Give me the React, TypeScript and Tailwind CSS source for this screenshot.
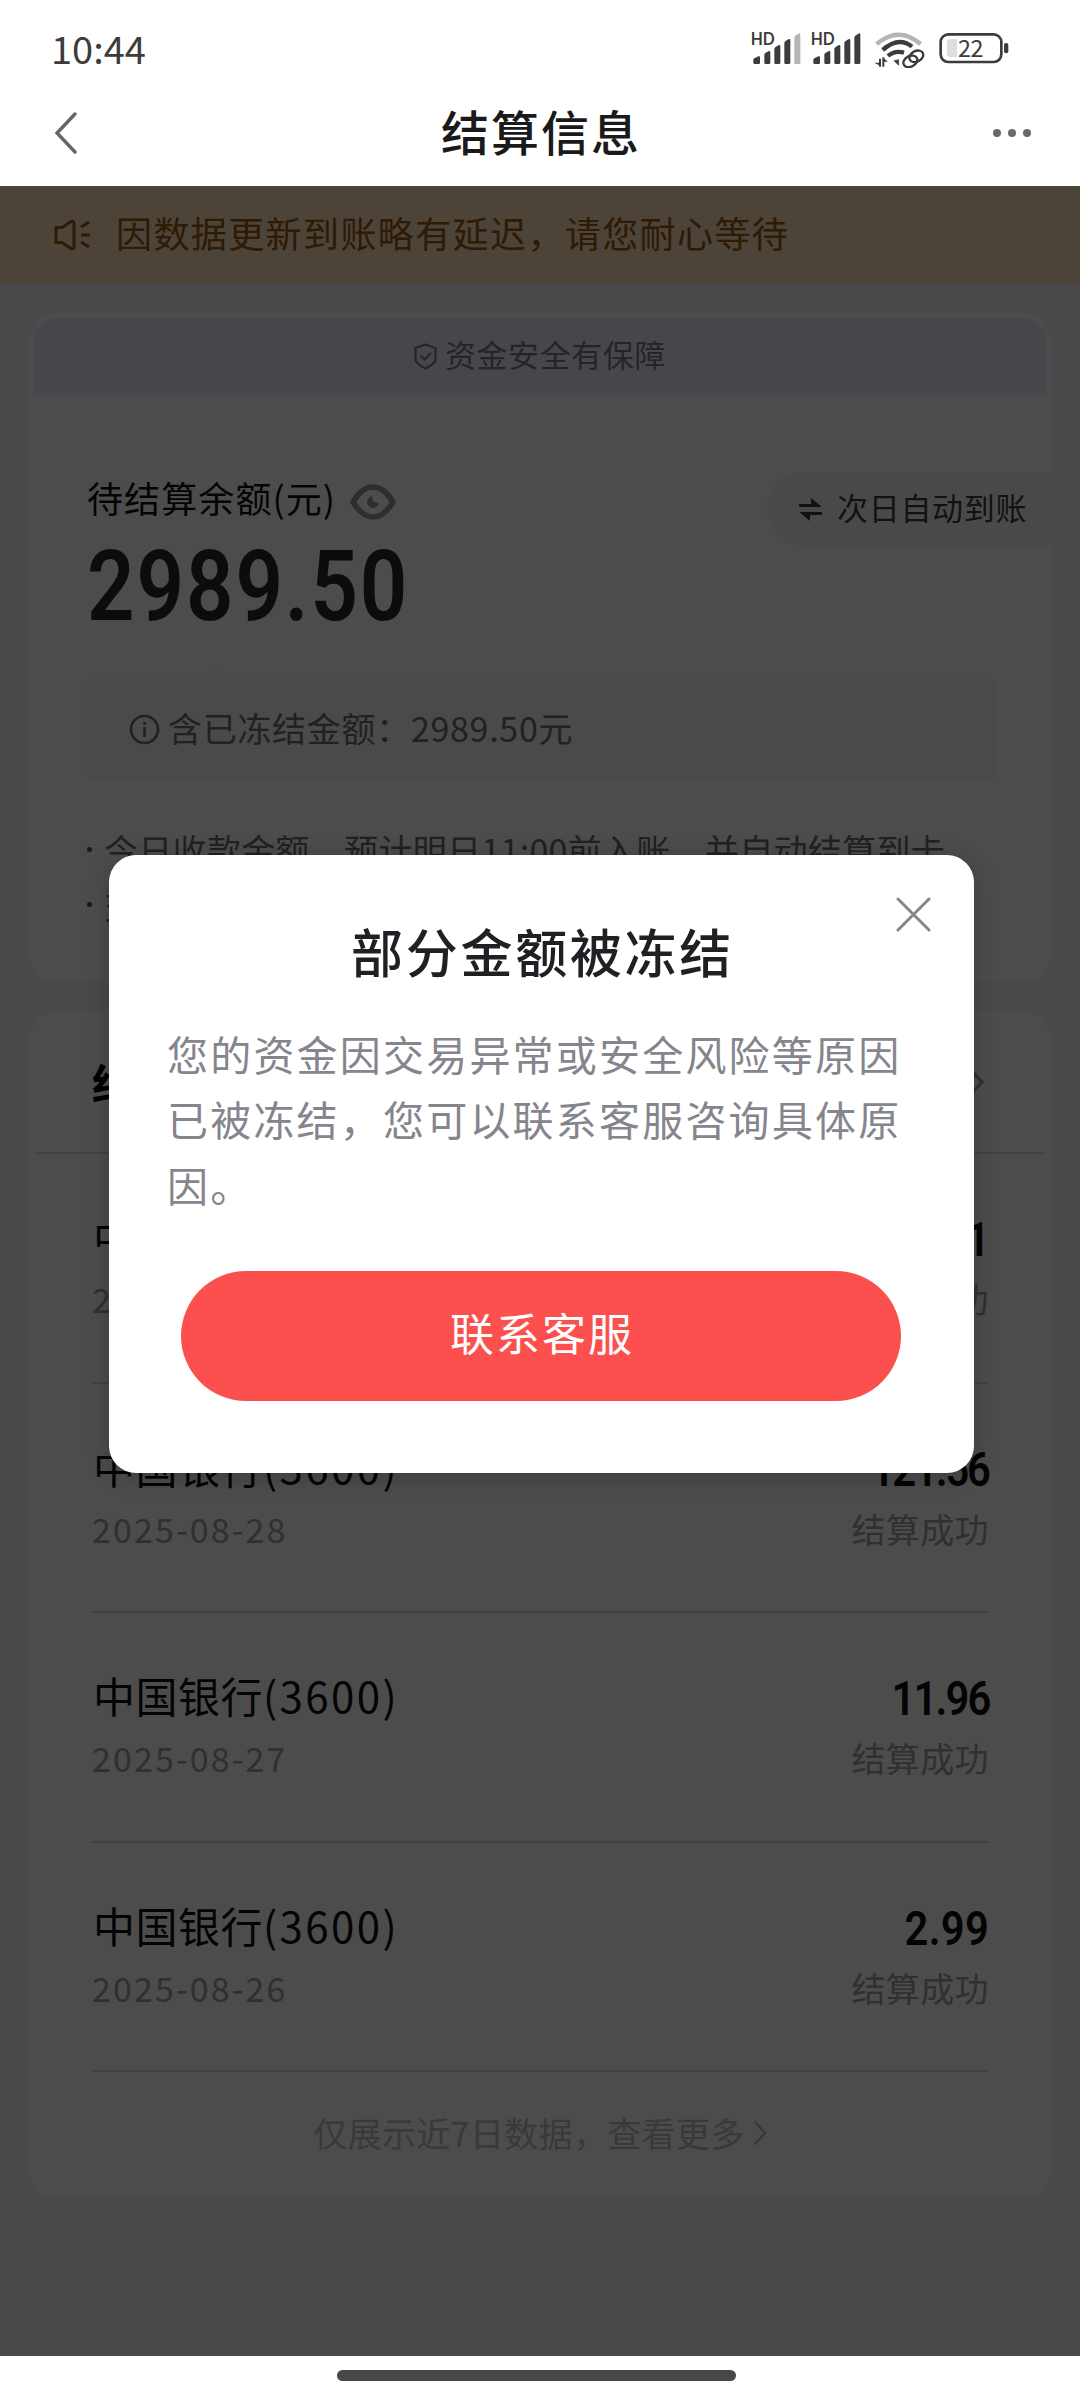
import React from 'react';

interface Settlement {
  date: string;
  amount: string;
  tracking: string;
}

const settlements: Settlement[] = [
  { date: '2025-08-29', amount: '0.01', tracking: 'tracking-[-1px]' },
  { date: '2025-08-28', amount: '121.56', tracking: 'tracking-[-2.500px]' },
  { date: '2025-08-27', amount: '11.96', tracking: 'tracking-[-2.200px]' },
  { date: '2025-08-26', amount: '2.99', tracking: 'tracking-[0.300px]' },
];

function SignalIcon({ weak }: { weak?: boolean }) {
  return (
    <svg className="w-[52px] h-[34px] overflow-visible" viewBox="0 0 156 102" fill="#3c3c3c">
      <text x="2" y="38" fontSize="50" fontWeight="700" fontFamily="Lato, sans-serif" textLength="72" lengthAdjust="spacingAndGlyphs">
        HD
      </text>
      <path d="M10 84q0-3 3-5l12-6q5-2 5 3v16q0 4-4 4H14q-4 0-4-4z" />
      <path d="M43 69q0-4 3-6l9-5q6-3 6 3v31q0 4-4 4H47q-4 0-4-4z" />
      <path d="M73 52q0-4 3-6l9-6q6-3 6 3v49q0 4-4 4H77q-4 0-4-4z" />
      <path d="M103 34q0-4 3-6l9-6q6-3 6 3v67q0 4-4 4h-10q-4 0-4-4z" />
      <path fill={weak ? '#b5b5b5' : '#3c3c3c'} d="M133 17q0-4 3-6l9-6q6-3 6 3v84q0 4-4 4h-10q-4 0-4-4z" />
    </svg>
  );
}

function WifiIcon() {
  return (
    <svg className="w-[52px] h-[36px]" viewBox="0 0 156 108" fill="none" stroke="#3c3c3c">
      <path d="M8 36Q74-20 140 36" stroke="#b5b5b5" strokeWidth="13" />
      <path d="M26 54Q74 12 114 44" strokeWidth="13" />
      <path d="M42 72Q62 54 90 62" strokeWidth="13" />
      <path d="M60 86l14-3v17z" fill="#3c3c3c" strokeWidth="2" />
      <path d="M18 80v24M28 76v28" strokeWidth="6" />
      <path d="M1 92h17v9zM28 78v11h14z" fill="#3c3c3c" stroke="none" />
      <g strokeWidth="7">
        <ellipse cx="127" cy="73" rx="22" ry="16" transform="rotate(-28 127 73)" />
        <ellipse cx="109" cy="88" rx="22" ry="16" transform="rotate(-28 109 88)" />
      </g>
    </svg>
  );
}

function BatteryIcon() {
  return (
    <svg className="w-[70px] h-[32px] overflow-visible" viewBox="0 0 210 96" fill="none">
      <rect x="5" y="7" width="182" height="83" rx="23" stroke="#3c3c3c" strokeWidth="8" />
      <path d="M54 21v54H33q-9 0-9-9V30q0-9 9-9z" fill="#dedede" />
      <rect x="195" y="33" width="13" height="31" rx="6" fill="#3c3c3c" />
      <text x="57" y="75" fontSize="70" fill="#3c3c3c" fontFamily="Noto Sans CJK SC, sans-serif" textLength="76">
        22
      </text>
    </svg>
  );
}

function Chevron({ className }: { className: string }) {
  return (
    <svg className={className} viewBox="0 0 16 30" fill="none" stroke="currentColor" strokeWidth="3">
      <path d="M1.5 1.5L14 15L1.5 28.5" />
    </svg>
  );
}

function TopBar() {
  return (
    <header className="h-[186px] bg-white">
      <div className="h-[96px] pl-[51px] pr-[71px] flex items-center justify-between">
        <span className="pb-[1px] text-[38px] leading-none text-[#3c3c3c]">10:44</span>
        <div className="flex items-start pt-[3px]">
          <SignalIcon weak />
          <div className="w-2" />
          <SignalIcon />
          <div className="w-3" />
          <WifiIcon />
          <div className="w-[13px]" />
          <BatteryIcon />
        </div>
      </div>
      <div className="h-[74px] pl-[54px] pr-[49px] grid grid-cols-[1fr_auto_1fr] items-center">
        <svg className="w-6 h-[42px]" viewBox="0 0 24 42" fill="none" stroke="#666" strokeWidth="3.4" strokeLinecap="round">
          <path d="M21 2L3 21L21 40" />
        </svg>
        <h1 className="pb-[6px] -ml-[3px] text-[48px] leading-none font-medium tracking-[2px] text-[#1a1a1a]">结算信息</h1>
        <div className="flex gap-[7px] justify-self-end">
          <i className="size-[8px] rounded-full bg-[#6a6a6a]" />
          <i className="size-[8px] rounded-full bg-[#6a6a6a]" />
          <i className="size-[8px] rounded-full bg-[#6a6a6a]" />
        </div>
      </div>
    </header>
  );
}

function Notice() {
  return (
    <div className="h-[98px] pl-[53px] flex items-center bg-[#fddfbf] text-[#995a10]">
      <svg className="w-[38px] h-[32px] mr-[25px]" viewBox="0 0 38 32" fill="none" stroke="currentColor" strokeWidth="3">
        <path d="M3 8.500h6l9-6q3-1 3 2v23q0 3-3 2l-9-6H3z" strokeLinejoin="round" />
        <path d="M28 8l8-5M28 16h9M28 23l8 5" />
      </svg>
      <span className="pb-[6px] text-[36px] leading-none tracking-[1.400px]">因数据更新到账略有延迟，请您耐心等待</span>
    </div>
  );
}

function BalanceCard() {
  return (
    <section className="mx-[29px] mt-[29px] h-[669px] rounded-[28px] p-[5px] bg-white">
      <div className="h-[77px] flex items-center justify-center rounded-t-[23px] bg-[#ebedfa] text-[#7e7e86]">
        <svg className="w-[23px] h-[27px] mr-[8px]" viewBox="0 0 23 27" fill="none" stroke="currentColor" strokeWidth="2.200">
          <path d="M11.500 1.500L21.500 5v12q0 3-10 8.500Q1.500 20 1.500 17V5z" strokeLinejoin="round" />
          <path d="M6.500 12.500l4 4 6.500-6.500" />
        </svg>
        <span className="pb-[7px] text-[31px] leading-none tracking-[0.600px]">资金安全有保障</span>
      </div>
      <div className="pl-[53px] pt-[77px] flex justify-between">
        <div>
          <div className="h-[56px] flex items-center text-[#101010]">
            <span className="pb-[6px] text-[36px] leading-none tracking-[1.100px]">待结算余额(元)</span>
            <svg className="w-[46px] h-[38px] ml-[14px] mt-[3px]" viewBox="0 0 46 38" fill="none">
              <path d="M3 19Q12 4 23 4t20 15Q34 34 23 34T3 19z" stroke="#9a9a9a" strokeWidth="5.500" />
              <path d="M22 13a6 6 0 1 0 7 7q-7 0-7-7z" fill="#9a9a9a" />
            </svg>
          </div>
          <div className="h-[100px] pt-[18px] flex items-center">
            <span className="inline-block origin-left scale-x-[0.85] font-['Roboto',sans-serif] text-[98px] leading-[84px] font-semibold tracking-[2.200px] text-[#282828]">
              2989.50
            </span>
          </div>
        </div>
        <div className="w-[284px] h-[74px] -mr-[5px] pl-[32px] flex items-center rounded-l-full bg-[#f3f4f7] text-[#3c3f46]">
          <svg className="w-[23px] h-[23px] mr-[15px]" viewBox="0 0 23 23" fill="currentColor">
            <path d="M0 6h12V0l11 9H0zM23 17H11v6L0 14h23z" />
          </svg>
          <span className="pb-[5px] text-[31px] leading-none tracking-[0.700px]">次日自动到账</span>
        </div>
      </div>
      <div className="ml-[53px] w-[909px] mt-[37px]">
        <svg className="block w-[28px] h-[14px] ml-[113px]" viewBox="0 0 28 14" fill="#f7f7f7">
          <path d="M14 0L28 14H0z" />
        </svg>
        <div className="h-[101px] pl-[42px] flex items-center rounded-md bg-[#f7f7f7] text-[#707070]">
          <svg className="w-[31px] h-[31px] mr-[8px]" viewBox="0 0 31 31" fill="none" stroke="currentColor" strokeWidth="2.600">
            <circle cx="15.500" cy="15.500" r="13.500" />
            <path d="M15.500 13v10M15.500 8v3" />
          </svg>
          <span className="pb-[3px] text-[34px] leading-none tracking-[0.700px]">含已冻结金额：2989.50元</span>
        </div>
      </div>
      <ul className="ml-[52px] mt-[42px] text-[34px] leading-[55px] tracking-[0.300px] text-[#707070] whitespace-nowrap">
        {['今日收款金额，预计明日11:00前入账，并自动结算到卡', '交易日顺延'].map((line) => (
          <li key={line} className="flex items-center">
            <i className="size-[5px] ml-[1px] mr-[12px] rounded-full bg-[#505050]" />
            {line}
          </li>
        ))}
      </ul>
    </section>
  );
}

function RecordCard() {
  return (
    <section className="mx-[29px] mt-[29px] h-[1187px] rounded-[28px] bg-white">
      <div className="mx-[5px] h-[143px] pl-[58px] pr-[62px] flex items-center justify-between border-b-2 border-[#dcdcdc]">
        <h2 className="text-[42px] leading-none font-bold text-black">结算记录</h2>
        <Chevron className="w-[16px] h-[32px] text-[#a0a0a0]" />
      </div>
      {settlements.map((item) => (
        <div key={item.date} className="mx-[62px] h-[229.600px] pt-[58px] border-b-2 border-[#dcdcdc]">
          <div className="h-[50px] flex items-center justify-between text-[#101010]">
            <span className="ml-[2px] pb-[2px] text-[42px] leading-none tracking-[0.500px]">
              中国银行<span className="tracking-[2.400px]">(3600)</span>
            </span>
            <span
              className={`inline-block origin-right scale-x-[0.87] pt-[6px] font-['Roboto',sans-serif] text-[48px] leading-none font-semibold ${item.tracking}`}
            >
              {item.amount}
            </span>
          </div>
          <div className="h-[74px] flex items-center justify-between text-[34px] leading-none text-[#a0a0a0]">
            <span className="ml-[1px] tracking-[2.100px]">{item.date}</span>
            <span className="tracking-[0.400px]">结算成功</span>
          </div>
        </div>
      ))}
      <div className="h-[122px] pb-[1px] flex items-center justify-center text-[#c0c0c0]">
        <span className="text-[34px] leading-none tracking-[0.350px]">仅展示近7日数据，查看更多</span>
        <Chevron className="w-[14px] h-[26px] ml-2" />
      </div>
    </section>
  );
}

function FrozenDialog() {
  return (
    <div className="absolute left-[109px] top-[669px] w-[865px] h-[618px] px-[58px] rounded-[27px] bg-white shadow-[0_4px_24px_rgba(0,0,0,0.2)]">
      <svg className="absolute right-[43px] top-[42px] size-[35px]" viewBox="0 0 35 35" fill="none" stroke="#85858d" strokeWidth="3" strokeLinecap="round">
        <path d="M2 2L33 33M33 2L2 33" />
      </svg>
      <h2 className="pt-[70px] pl-[2px] text-center text-[52px] leading-[52px] font-medium tracking-[2.700px] text-[#1f2024]">部分金额被冻结</h2>
      <p className="mt-[44px] w-[744px] text-[41px] leading-[65.300px] tracking-[2.200px] text-[#85858d]">
        您的资金因交易异常或安全风险等原因已被冻结，您可以联系客服咨询具体原因。
      </p>
      <button className="mt-[54px] ml-[14px] pb-[7px] pl-[2px] w-[720px] h-[130px] block rounded-full bg-[#fc504f] text-[44px] leading-none tracking-[2px] text-white">
        联系客服
      </button>
    </div>
  );
}

function App() {
  return (
    <div className="w-[1080px] h-[2400px] flex flex-col overflow-hidden bg-white font-['Noto_Sans_CJK_SC',sans-serif]">
      <TopBar />
      <main className="relative h-[2170px] bg-[#f0f3f8]">
        <Notice />
        <BalanceCard />
        <RecordCard />
        {/* 遮罩层 */}
        <div className="absolute inset-0 bg-black/70" />
        <FrozenDialog />
      </main>
      <footer className="h-[44px] pt-[14px] bg-white">
        <div className="ml-[337px] w-[399px] h-[11px] rounded-full bg-[#484848]" />
      </footer>
    </div>
  );
}

export default App;
